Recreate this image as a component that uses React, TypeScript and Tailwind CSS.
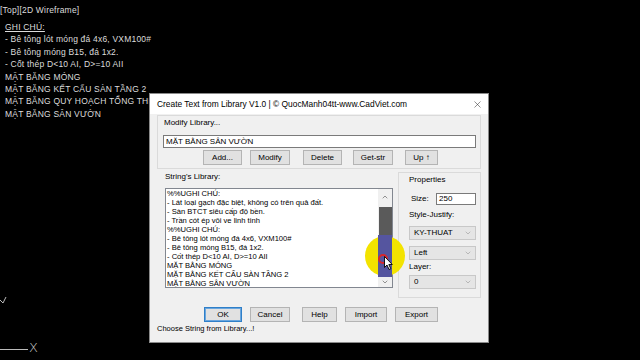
import { ChevronDown, ChevronUp, X } from "lucide-react";

const canvasLines = [
  "- Bê tông lót móng đá 4x6, VXM100#",
  "- Bê tông móng B15, đá 1x2.",
  "- Cốt thép D<10 AI, D>=10 AII",
  "MẶT BẰNG MÓNG",
  "MẶT BẰNG KẾT CẤU SÀN TẦNG 2",
  "MẶT BẰNG QUY HOẠCH TỔNG THỂ",
  "MẶT BẰNG SÂN VƯỜN",
];

const libraryLines = [
  "%%UGHI CHÚ:",
  "- Lát loại gạch đặc biệt, không có trên quả đất.",
  "- Sàn BTCT siêu cấp độ bền.",
  "- Trần cót ép vôi ve linh tinh",
  "%%UGHI CHÚ:",
  "- Bê tông lót móng đá 4x6, VXM100#",
  "- Bê tông móng B15, đá 1x2.",
  "- Cốt thép D<10 AI, D>=10 AII",
  "MẶT BẰNG MÓNG",
  "MẶT BẰNG KẾT CẤU SÀN TẦNG 2",
  "MẶT BẰNG SÂN VƯỜN",
];

function Btn({ label, w, primary = false }: { label: string; w: string; primary?: boolean }) {
  return (
    <div
      className={`${w} h-[15px] flex items-center justify-center bg-[#e1e1e1] border text-[8px] text-black ${
        primary ? "border-[#2f7fc8] shadow-[inset_0_0_0_1px_#6aa6de]" : "border-[#b4b4b4]"
      }`}
    >
      {label}
    </div>
  );
}

function Combo({ value }: { value: string }) {
  return (
    <div className="h-[14px] flex items-center justify-between bg-[#e5e5e5] border border-[#c8c8c8] pl-[4px] pr-[3px] text-[8px] text-black">
      <span>{value}</span>
      <ChevronDown size={8} strokeWidth={1.5} className="text-[#888]" />
    </div>
  );
}

export default function App() {
  return (
    <div className="relative w-[640px] h-[360px] bg-black overflow-hidden font-['Liberation_Sans',Arial,sans-serif]">
      {/* AutoCAD canvas text */}
      <div className="pt-[4px] text-[8.5px] text-[#dcdcdc] tracking-[0.2px]">
        <div className="leading-[12px]">[Top][2D Wireframe]</div>
        <div className="pl-[5px] mt-[5px] flex flex-col leading-[12.4px]">
          <span className="underline">GHI CHÚ:</span>
          {canvasLines.map((l) => (
            <span key={l} className="whitespace-nowrap">
              {l}
            </span>
          ))}
        </div>
      </div>

      {/* UCS icon */}
      <svg className="absolute left-0 top-[292px]" width="50" height="68" viewBox="0 0 50 68">
        <path d="M0 8 L3 11 L6 5" stroke="#bbb" strokeWidth="1" fill="none" />
        <line x1="0" y1="57.5" x2="28" y2="57.5" stroke="#bbb" strokeWidth="1" />
        <text x="29" y="60" fontSize="13" fill="#ccc" fontFamily="DejaVu Sans, sans-serif" fontWeight="200">
          X
        </text>
      </svg>

      {/* Dialog window */}
      <div className="absolute left-[149px] top-[93px] w-[340px] h-[250px] flex flex-col bg-[#f0f0f0] border border-[#8a8a8a] text-black">
        <div className="h-[20px] shrink-0 bg-white flex items-center justify-between pl-[7px] pr-[5px]">
          <span className="text-[8.4px] whitespace-nowrap">
            Create Text from Library V1.0 | © QuocManh04tt-www.CadViet.com
          </span>
          <X size={11} strokeWidth={1.2} className="text-[#333]" />
        </div>

        <div className="flex-1 flex flex-col px-[7px] pt-[1px]">
          {/* Modify Library */}
          <div className="h-[54px] border border-[#dadada] pl-[5px] pr-[4px] flex flex-col">
            <div className="text-[8px] leading-[10px] pl-[1px] mt-[2px]">Modify Library...</div>
            <div className="mt-[7px] h-[13px] bg-white border border-[#7a7a7a] flex items-center pl-[2px] text-[8px]">
              MẶT BẰNG SÂN VƯỜN
            </div>
            <div className="mt-[2px] flex pl-[40px]">
              <Btn label="Add..." w="w-[39px]" />
              <div className="ml-[8px]">
                <Btn label="Modify" w="w-[40px]" />
              </div>
              <div className="ml-[13px]">
                <Btn label="Delete" w="w-[39px]" />
              </div>
              <div className="ml-[11px]">
                <Btn label="Get-str" w="w-[40px]" />
              </div>
              <div className="ml-[12px]">
                <Btn label="Up ↑" w="w-[33px]" />
              </div>
            </div>
          </div>

          {/* Library + properties */}
          <div className="mt-[3px] flex">
            <div className="pl-[8px] flex flex-col">
              <div className="text-[8px] leading-[10px]">String's Library:</div>
              <div className="mt-[6px] w-[228px] h-[100px] bg-white border border-[#828790] flex overflow-hidden">
                <div className="flex-1 pl-[1px] flex flex-col text-[7.6px] leading-[9px] whitespace-nowrap">
                  {libraryLines.map((l, i) => (
                    <span key={i}>{l}</span>
                  ))}
                </div>
                <div className="w-[14px] flex flex-col items-center bg-[#f0f0f0]">
                  <div className="h-[16px] flex items-center justify-center">
                    <ChevronUp size={8} strokeWidth={2} className="text-[#606060]" />
                  </div>
                  <div className="relative z-10 mt-[2px] w-[13px] h-[28px] bg-[#5a5a5a]" />
                  <div className="relative z-10 w-[13px] h-[42px] bg-[#55559f]" />
                  <div className="flex-1 flex items-center justify-center">
                    <ChevronDown size={8} strokeWidth={2} className="text-[#606060]" />
                  </div>
                </div>
              </div>
            </div>

            <div className="ml-auto w-[83px] h-[126px] border border-[#dadada] flex flex-col pl-[10px] pr-[4px] text-[8px]">
              <div className="leading-[10px] mt-[2px]">Properties</div>
              <div className="mt-[8px] flex items-center justify-between">
                <span className="pl-[2px]">Size:</span>
                <div className="w-[40px] h-[12px] bg-white border border-[#7a7a7a] flex items-center pl-[2px]">
                  250
                </div>
              </div>
              <div className="mt-[5px] leading-[10px]">Style-Justify:</div>
              <div className="mt-[6px]">
                <Combo value="KY-THUAT" />
              </div>
              <div className="mt-[6px]">
                <Combo value="Left" />
              </div>
              <div className="mt-[2px] leading-[10px]">Layer:</div>
              <div className="mt-[3px]">
                <Combo value="0" />
              </div>
            </div>
          </div>

          {/* Bottom buttons */}
          <div className="mt-[9px] flex pl-[47px]">
            <Btn label="OK" w="w-[38px]" primary />
            <div className="ml-[8px]">
              <Btn label="Cancel" w="w-[40px]" />
            </div>
            <div className="ml-[12px]">
              <Btn label="Help" w="w-[35px]" />
            </div>
            <div className="ml-[8px]">
              <Btn label="Import" w="w-[42px]" />
            </div>
            <div className="ml-[8px]">
              <Btn label="Export" w="w-[43px]" />
            </div>
          </div>
          <div className="mt-[2px] text-[7.5px] leading-[10px]">Choose String from Library...!</div>
        </div>
      </div>

      {/* cursor highlight */}
      <div className="absolute left-[365px] top-[236px] w-[40px] h-[40px] rounded-full bg-[#f3e300]" />
      <div className="absolute left-[378px] top-[235px] z-20 w-[14px] h-[42px] bg-[#55559f]" />
      <div className="absolute left-[378px] top-[254px] z-20 w-[10px] h-[10px] rounded-full border-2 border-[#d8262c]" />
      <svg className="absolute left-[384px] top-[256px] z-30" width="10" height="15" viewBox="0 0 10 15">
        <path d="M0.5 0.5 L0.5 11.5 L3 9 L5 13.5 L6.8 12.7 L4.8 8.5 L8.3 8.5 Z" fill="white" stroke="black" strokeWidth="0.9" />
      </svg>
    </div>
  );
}
